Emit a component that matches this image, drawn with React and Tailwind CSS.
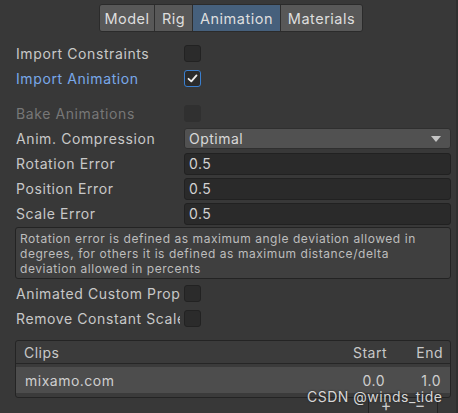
import React from "react";

const font = { fontFamily: "Inter, 'Noto Sans', sans-serif" };

function Checkbox({ checked, dim }) {
  return (
    <div
      className={
        "w-[17px] h-[17px] shrink-0 rounded-[3px] border flex items-center justify-center " +
        (checked ? "border-[#3a7fcf] bg-[#2b2b2b]" : dim ? "border-[#303030] bg-[#303030]" : "border-[#222222] bg-[#2b2b2b]")
      }
    >
      {checked && (
        <svg width="11" height="11" viewBox="0 0 11 11">
          <path d="M1.5 5.8 L4.3 8.4 L9.5 2.4" fill="none" stroke="#eeeeee" strokeWidth="1.8" strokeLinecap="round" strokeLinejoin="round" />
        </svg>
      )}
    </div>
  );
}

function Row({ label, children, labelClass = "text-[#c8c8c8]" }) {
  return (
    <div className="flex items-center h-[25px] pl-4 pr-[7px]">
      <div className={"w-[164px] shrink-0 overflow-hidden whitespace-nowrap text-[14px] tracking-[0.6px] " + labelClass}>{label}</div>
      <div className="ml-[4px] flex-1 flex items-center">{children}</div>
    </div>
  );
}

function Field({ value }) {
  return (
    <div className="w-full h-[22px] rounded-[3px] bg-[#2a2a2a] border border-[#212121] flex items-center px-[4px] text-[14px] tracking-[0.5px] text-[#d2d2d2]">
      {value}
    </div>
  );
}

export default function App() {
  return (
    <div className="relative w-[458px] h-[413px] bg-[#383838] overflow-hidden" style={font}>
      <div className="absolute right-0 top-0 w-[2px] h-full bg-[#303030]" />
      {/* tabs */}
      <div className="pt-[4px] flex justify-center pl-[4px]">
        <div className="flex h-[28px] rounded-[3px] overflow-hidden border border-[#2b2b2b] text-[14.5px] tracking-[0.5px] text-[#dedede]">
          <div className="w-[55px] pt-[2px] flex items-center justify-center bg-[#585858] border-r border-[#2e2e2e]">Model</div>
          <div className="w-[38px] pt-[2px] flex items-center justify-center bg-[#585858] border-r border-[#2e2e2e]">Rig</div>
          <div className="w-[88px] pt-[2px] flex items-center justify-center bg-[#46607c] border-r border-[#2e2e2e]">Animation</div>
          <div className="w-[81px] pt-[2px] flex items-center justify-center bg-[#585858]">Materials</div>
        </div>
      </div>

      <div className="mt-[9px]">
        <Row label="Import Constraints"><Checkbox /></Row>
        <Row label="Import Animation" labelClass="text-[#79a8ea]"><Checkbox checked /></Row>
      </div>

      <div className="mt-[10px]">
        <Row label="Bake Animations" labelClass="text-[#777777]"><Checkbox dim /></Row>
        <Row label="Anim. Compression">
          <div className="w-full h-[21px] rounded-[3px] bg-[#515151] border border-[#2f2f2f] flex items-center justify-between pl-[4px] pr-[9px] text-[14px] tracking-[0.5px] text-[#d8d8d8]">
            <span>Optimal</span>
            <svg width="10" height="6" viewBox="0 0 10 6"><path d="M0 0 L10 0 L5 6 Z" fill="#c4c4c4" /></svg>
          </div>
        </Row>
        <Row label="Rotation Error"><Field value="0.5" /></Row>
        <Row label="Position Error"><Field value="0.5" /></Row>
        <Row label="Scale Error"><Field value="0.5" /></Row>
      </div>

      <div className="mx-[15px] mr-[7px] mt-[1px] h-[52px] rounded-[3px] border border-[#232323] bg-[#3f3f3f] px-[4px] pt-[3px] text-[12px] leading-[15px] tracking-[0.55px] text-[#bdbdbd]">
        Rotation error is defined as maximum angle deviation allowed in degrees, for others it is defined as maximum distance/delta deviation allowed in percents
      </div>

      <div className="mt-[2px]">
        <Row label="Animated Custom Properties"><Checkbox /></Row>
        <Row label="Remove Constant Scale Curves"><Checkbox /></Row>
      </div>

      <div className="mx-[15px] mr-[7px] mt-[9px] h-[58px] rounded-[3px] border border-[#242424] bg-[#3b3b3b] overflow-hidden">
        <div className="h-[23px] flex items-center border-b border-[#262626] text-[14px] tracking-[0.5px] text-[#c8c8c8] pl-[8px] pr-[7px]">
          <div className="flex-1">Clips</div>
          <div className="w-[60px] text-right">Start</div>
          <div className="w-[56px] text-right">End</div>
        </div>
        <div className="mt-[3px] h-[26px] bg-[#4d4d4d] flex items-center text-[14px] tracking-[0.5px] text-[#cfcfcf] pl-[9px] pr-[9px]">
          <div className="flex-1">mixamo.com</div>
          <div className="w-[60px] text-right">0.0</div>
          <div className="w-[56px] text-right">1.0</div>
        </div>
      </div>

      <div className="ml-[368px] w-[70px] h-[20px] border border-t-0 border-[#242424] bg-[#3b3b3b] flex items-start justify-around text-[16px] leading-[14px] text-[#cccccc]">
        <span>+</span>
        <span>−</span>
      </div>

      <div
        className="absolute left-[307px] top-[386px] text-[14px] tracking-[0.5px] text-[#d6d6d6] whitespace-nowrap"
        style={{ textShadow: "0 0 2px #222" }}
      >
        CSDN @winds_tide
      </div>
    </div>
  );
}
